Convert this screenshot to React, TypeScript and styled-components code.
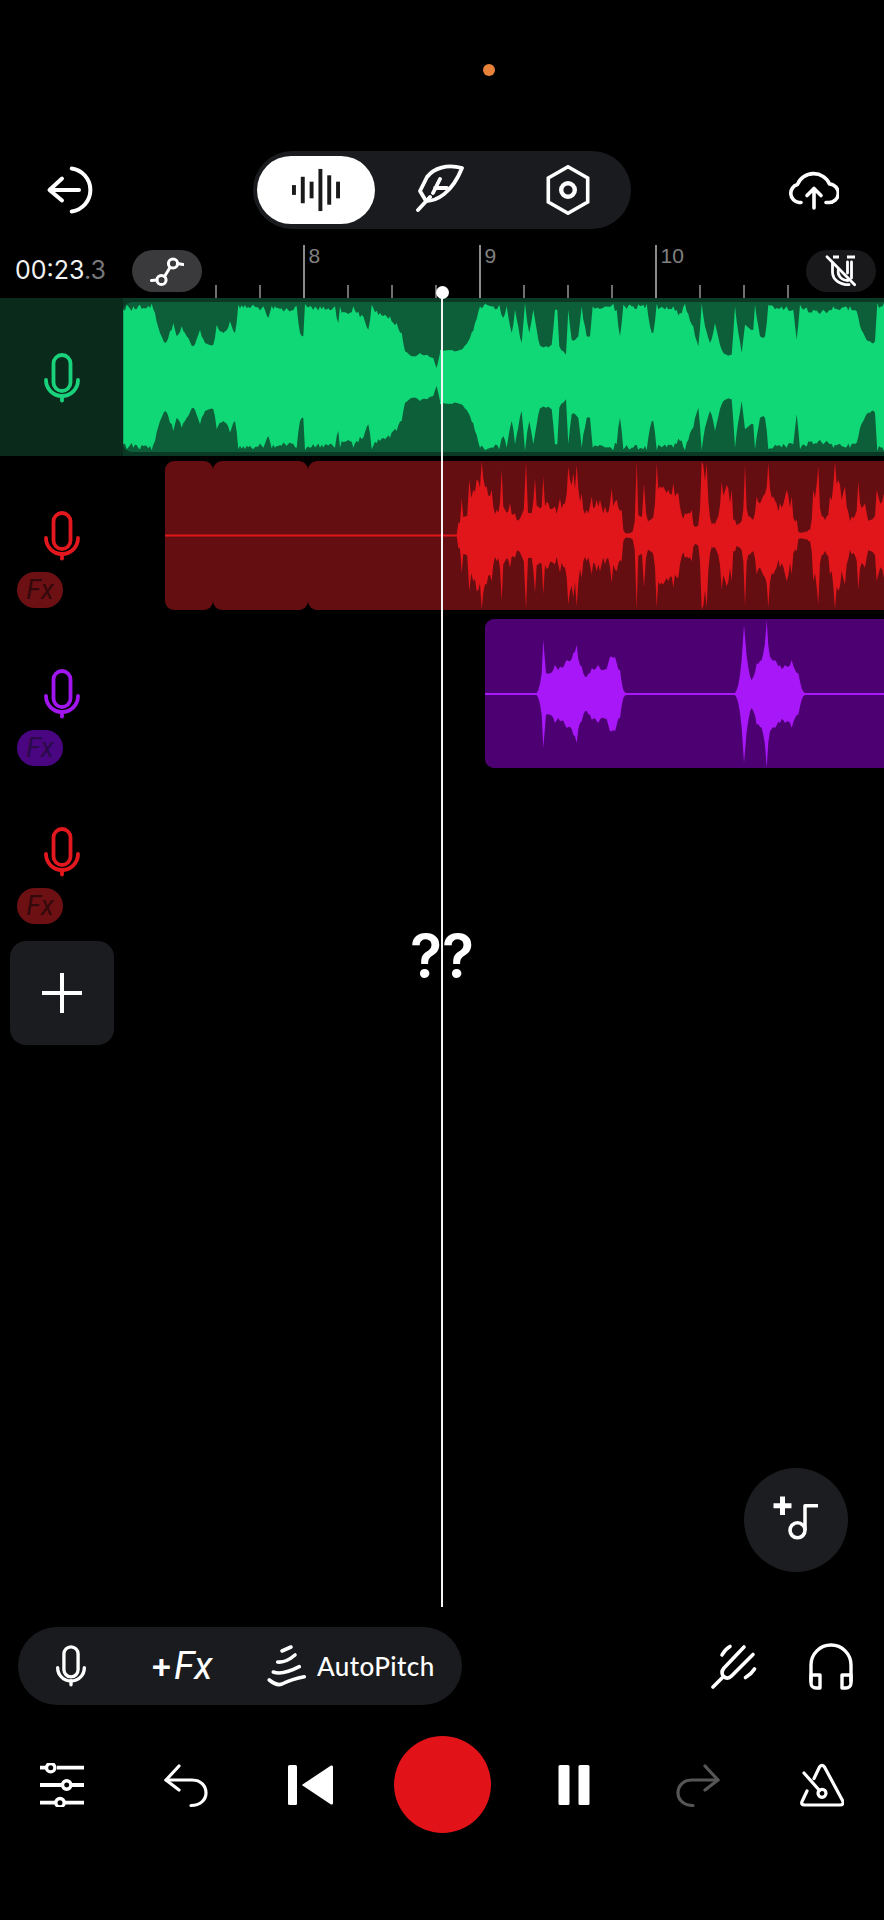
import React from "react";
import styled, { createGlobalStyle } from "styled-components";

const Global = createGlobalStyle`
  html, body { margin: 0; padding: 0; background: #000; }
  * { box-sizing: border-box; }
`;

const Page = styled.div`
  position: relative;
  width: 884px;
  height: 1920px;
  overflow: hidden;
  background: #000;
  display: flex;
  flex-direction: column;
  font-family: "Liberation Sans", sans-serif;
  color: #fff;
`;

const StatusArea = styled.div`
  height: 150px;
  padding: 64px 0 0 483px;
`;
const StatusDot = styled.div`
  width: 12px;
  height: 12px;
  border-radius: 50%;
  background: #e8813a;
`;

const Header = styled.header`
  height: 80px;
  display: flex;
  align-items: center;
  padding-left: 46px;
`;
const ModePill = styled.div`
  width: 378px;
  height: 78px;
  margin-left: 159px;
  padding: 5px 4px;
  border-radius: 39px;
  background: #1a1b1e;
  display: grid;
  grid-template-columns: 118px 134px 118px;
  align-items: center;
`;
const ModeTab = styled.div<{ $active?: boolean }>`
  height: 68px;
  border-radius: 34px;
  display: flex;
  align-items: center;
  justify-content: center;
  background: ${(p) => (p.$active ? "#fff" : "transparent")};
`;
const CloudSlot = styled.div`
  margin-left: 158px;
  display: flex;
`;

const RulerRow = styled.div`
  height: 68px;
  display: flex;
  padding-left: 15px;
`;
const TimeText = styled.div`
  width: 117px;
  padding-top: 26px;
  font-family: Inter, sans-serif;
  font-size: 25px;
  line-height: 28px;
  color: #f2f2f2;
`;
const TimeFraction = styled.span`
  color: #77777a;
`;
const RoundChip = styled.div<{ $bg: string }>`
  width: 70px;
  height: 42px;
  margin-top: 20px;
  border-radius: 21px;
  background: ${(p) => p.$bg};
  display: flex;
  align-items: center;
  justify-content: center;
  flex-shrink: 0;
`;
const Ruler = styled.div`
  width: 591px;
  margin-left: 13px;
  padding-top: 15px;
  display: flex;
  overflow: hidden;
  flex-shrink: 0;
`;
const Tick = styled.div`
  width: 44px;
  height: 53px;
  flex-shrink: 0;
  display: flex;
  align-items: flex-end;
`;
const TickMark = styled.div<{ $major?: boolean }>`
  width: 1.5px;
  height: ${(p) => (p.$major ? 53 : 13)}px;
  background: ${(p) => (p.$major ? "#8b8b8b" : "#6f6f6f")};
`;
const TickLabel = styled.span`
  align-self: flex-start;
  margin-left: 4px;
  font-size: 21px;
  line-height: 22px;
  color: #808080;
`;

const Row = styled.div<{ $active?: boolean }>`
  height: 158px;
  display: flex;
  background: ${(p) => (p.$active ? "#0a3a26" : "transparent")};
`;
const TrackHead = styled.div<{ $active?: boolean }>`
  width: 123px;
  padding-top: 55px;
  flex-shrink: 0;
  display: flex;
  flex-direction: column;
  background: ${(p) => (p.$active ? "#0a2a1c" : "transparent")};
`;
const MicSlot = styled.div`
  margin-left: 44px;
  display: flex;
`;
const FxBadge = styled.div<{ $bg: string; $fg: string }>`
  width: 46px;
  height: 36px;
  margin: 11px 0 0 17px;
  border-radius: 18px;
  background: ${(p) => p.$bg};
  color: ${(p) => p.$fg};
  font-family: Roboto, sans-serif;
  font-style: italic;
  font-size: 27px;
  line-height: 36px;
  text-align: center;
`;
const Lane = styled.div<{ $start: number; $active?: boolean }>`
  flex: 1;
  min-width: 0;
  padding: ${(p) => (p.$active ? "4px 0" : "5px 0 4px")};
  padding-left: ${(p) => p.$start}px;
  display: flex;
`;
const Clip = styled.div`
  position: relative;
  flex: 1;
  min-width: 0;
  display: flex;
  overflow: hidden;
`;
const ClipPart = styled.div<{ $color: string; $width?: number }>`
  flex-shrink: 0;
  width: ${(p) => (p.$width ? `${p.$width}px` : "1000px")};
  border-radius: 9px;
  background: ${(p) => p.$color};
`;
const WaveSvg = styled.svg`
  position: absolute;
  left: 0;
  top: 0;
`;

const AddTrack = styled.div`
  width: 104px;
  height: 104px;
  margin: 11px 0 0 10px;
  border-radius: 16px;
  background: #1b1c1f;
  display: flex;
  align-items: center;
  justify-content: center;
`;

const Spacer = styled.div`
  flex: 1;
  display: flex;
  flex-direction: column;
  justify-content: flex-end;
  align-items: flex-end;
  padding: 0 36px 55px 0;
`;
const MusicButton = styled.div`
  width: 104px;
  height: 104px;
  border-radius: 50%;
  background: #1c1d20;
  display: flex;
`;

const ToolsRow = styled.div`
  height: 78px;
  padding-left: 18px;
  display: flex;
  align-items: center;
`;
const ToolPill = styled.div`
  width: 444px;
  height: 78px;
  border-radius: 39px;
  background: #1a1b1e;
  padding-left: 38px;
  display: flex;
  align-items: center;
`;
const FxLabel = styled.div`
  margin-left: 66px;
  display: flex;
  align-items: center;
  font-family: Roboto, sans-serif;
  width: 62px;
`;
const FxPlus = styled.span`
  font-size: 34px;
  font-weight: 500;
  line-height: 40px;
`;
const FxItalic = styled.span`
  margin-left: 3px;
  font-size: 38px;
  font-style: italic;
  font-weight: 400;
  line-height: 40px;
`;
const PitchSlot = styled.div`
  margin-left: 53px;
  display: flex;
`;
const PitchLabel = styled.span`
  margin-left: 10px;
  font-family: Lato, sans-serif;
  font-size: 26px;
  font-weight: 500;
  letter-spacing: 0.4px;
  white-space: nowrap;
`;
const ToolIcons = styled.div`
  margin-left: 249px;
  display: flex;
  align-items: center;
  gap: 50px;
`;

const Transport = styled.div`
  margin: 31px 0 87px;
  height: 97px;
  display: grid;
  grid-template-columns: repeat(3, 124px) 140px repeat(3, 124px);
  align-items: center;
  justify-items: center;
`;
const RecordButton = styled.div`
  width: 97px;
  height: 97px;
  border-radius: 50%;
  background: #e11319;
`;

const Playhead = styled.div`
  position: absolute;
  left: 441px;
  top: 290px;
  width: 2px;
  height: 1317px;
  background: #f4f4f4;
`;
const PlayheadKnob = styled.div`
  position: absolute;
  left: -5.5px;
  top: -4px;
  width: 13px;
  height: 13px;
  border-radius: 50%;
  background: #fff;
`;
const Unknown = styled.div`
  position: absolute;
  left: 398px;
  top: 921px;
  width: 88px;
  text-align: center;
  font-family: Inter, sans-serif;
  font-weight: 600;
  font-size: 59px;
  line-height: 70px;
`;

type Pt = [number, number];

const Stroke = styled.svg`
  display: block;
  fill: none;
  stroke-linecap: round;
  stroke-linejoin: round;
  flex-shrink: 0;
`;

const Mic = ({ color, w = 36, h = 50, sw = 3.8 }: { color: string; w?: number; h?: number; sw?: number }) => (
  <Stroke width={w} height={h} viewBox="0 0 36 50" stroke={color} strokeWidth={sw}>
    <rect x="9.5" y="2" width="17" height="36" rx="8.5" />
    <path d="M2 27A16 16 0 0 0 34 27" />
    <path d="M18 43V47.5" />
  </Stroke>
);

const BackIcon = () => (
  <Stroke width={48} height={48} viewBox="0 0 48 48" stroke="#fff" strokeWidth={4}>
    <path d="M4 24H33M16 12.5L3.5 24L16 34.5" />
    <path d="M25.7 2.6A21.6 21.6 0 0 1 25.7 45.4" />
  </Stroke>
);

const BarsIcon = () => {
  const bars: [number, number][] = [[0, 10], [9, 27], [18, 17], [27, 43], [36, 30], [45, 17]];
  return (
    <svg width={48} height={44} viewBox="0 0 49 44" fill="#1a1a1a">
      {bars.map(([x, h]) => (
        <rect key={x} x={x} y={22 - h / 2} width={4} height={h} />
      ))}
    </svg>
  );
};

const FeatherIcon = () => (
  <Stroke width={52} height={52} viewBox="9 9 52 52" stroke="#fff" strokeWidth={3.8}>
    <path d="M55 13C40 9 27 13 20 22L13 36L19 46C30 46 45 38 55 13Z" />
    <path d="M23 42L11 55M33 24L26 38M28 33H40" />
  </Stroke>
);

const HexIcon = () => (
  <Stroke width={44} height={50} viewBox="0 0 44 50" stroke="#fff" strokeWidth={3.6}>
    <path d="M22 1.8L41.7 13V37L22 48.2L2.3 37V13Z" strokeLinejoin="miter" />
    <circle cx="22" cy="25" r="6.8" strokeWidth={4.4} />
  </Stroke>
);

const CloudIcon = () => (
  <Stroke width={50} height={40} viewBox="0 0 50 40" stroke="#fff" strokeWidth={3.6}>
    <path d="M12 32.5H10A9.2 9.2 0 0 1 8.5 14.5A17 16 0 0 1 40.5 14A9.2 9.2 0 0 1 39.5 32.5H37" />
    <path d="M25 38V19M18 25.5L25 18.5L32 25.5" />
  </Stroke>
);

const NodesIcon = () => (
  <Stroke width={34} height={34} viewBox="0 0 34 34" stroke="#fff" strokeWidth={3}>
    <circle cx="11.5" cy="26" r="4.6" />
    <circle cx="23" cy="9.5" r="4.6" />
    <path d="M1.5 26.5L7 26M14.5 22.5L20 13.5M27.5 9.5L33 10.5" />
  </Stroke>
);

const MagnetOffIcon = () => (
  <Stroke width={34} height={34} viewBox="22 10 34 34" stroke="#fff" strokeWidth={2.8}>
    <path d="M25 12.7L52.7 40.7" />
    <path d="M31 13H37M45 13H53" strokeLinecap="butt" />
    <path d="M30.5 19V28C30.5 36 38 40.7 47 40.7" />
    <path d="M49.5 18V34M45.5 18V29" />
    <path d="M36.5 25C35 31 39 36.5 46 36.5" />
  </Stroke>
);

const PlusIcon = () => (
  <Stroke width={44} height={44} viewBox="0 0 44 44" stroke="#fff" strokeWidth={4}>
    <path d="M22 2V42M2 22H42" strokeLinecap="butt" />
  </Stroke>
);

const MusicPlusIcon = () => (
  <Stroke width={104} height={104} viewBox="0 0 104 104" stroke="#fff">
    <path d="M38.5 28.5V47M29.5 37.7H47.5" strokeWidth={5} strokeLinecap="butt" />
    <path d="M61 62V37.7H74" strokeWidth={3.5} strokeLinecap="butt" />
    <circle cx="53.5" cy="62.3" r="7.5" strokeWidth={3.6} />
  </Stroke>
);

const PitchIcon = () => (
  <Stroke width={40} height={45} viewBox="11 8 40 45" stroke="#fff" strokeWidth={3.6}>
    <path d="M26 15L35 11" />
    <path d="M21.7 26C26 26.5 32 25 39 19" />
    <path d="M17.3 36C24 38.5 33 36 43.3 30.7" />
    <path d="M13.3 44C17 47 21 50 26 48C31 45.5 38 42.5 48.3 40.7" />
  </Stroke>
);

const ForkIcon = () => (
  <Stroke width={48} height={48} viewBox="0 0 48 48" stroke="#fff" strokeWidth={3.6}>
    <path d="M2 45L12.5 34.5" />
    <path d="M33 5L13 26C10.5 29 10.5 32 12.5 34.5C15 36.5 18 36.5 20.5 34L42 12.5" />
    <path d="M11 13C13 9 15.5 6.5 19 4.5" />
    <path d="M34.5 35.5C38 33.5 41 31 43.5 27" />
  </Stroke>
);

const HeadphonesIcon = () => (
  <Stroke width={44} height={47} viewBox="0 0 44 47" stroke="#fff" strokeWidth={3.4}>
    <path d="M2 38V22A20 20 0 0 1 42 22V38" />
    <path d="M2 32H11V45H7A5 5 0 0 1 2 40Z" />
    <path d="M42 32H33V45H37A5 5 0 0 0 42 40Z" />
  </Stroke>
);

const SlidersIcon = () => (
  <Stroke width={44} height={44} viewBox="0 0 44 44" stroke="#fff" strokeWidth={3.8}>
    <path d="M0 4.7H6M17 4.7H44" strokeLinecap="butt" />
    <path d="M0 22H22M32 22H44" strokeLinecap="butt" />
    <path d="M0 39.7H15.5M25 39.7H44" strokeLinecap="butt" />
    <circle cx="10.7" cy="4.7" r="4.2" strokeWidth={3.4} />
    <circle cx="26.7" cy="22" r="4.2" strokeWidth={3.4} />
    <circle cx="20" cy="39.7" r="4.2" strokeWidth={3.4} />
  </Stroke>
);

const UndoIcon = ({ color, flip }: { color: string; flip?: boolean }) => (
  <Stroke width={44} height={46} viewBox="0 0 44 46" stroke={color} strokeWidth={3.2}>
    <g transform={flip ? "matrix(-1 0 0 1 44 0)" : undefined}>
      <path d="M15 4L2 18L15 28" />
      <path d="M2 18H28C37 18 42 24 42 31C42 38 36 43.5 27 43.5" />
    </g>
  </Stroke>
);

const PrevIcon = () => (
  <svg width={45} height={40} viewBox="0 0 45 40" fill="#fff">
    <rect x="0" y="0" width="9" height="40" rx="1.5" />
    <path d="M14.5 19.5L43 0.6Q45 0 45 2V38Q45 40 43 39.4L14.5 20.5Q14 20 14.5 19.5Z" />
  </svg>
);

const PauseIcon = () => (
  <svg width={32} height={40} viewBox="0 0 32 40" fill="#fff">
    <rect x="0.5" y="0" width="11" height="40" rx="1.5" />
    <rect x="20.5" y="0" width="11" height="40" rx="1.5" />
  </svg>
);

const MetronomeIcon = () => (
  <Stroke width={44} height={44} viewBox="0 0 44 44" stroke="#fff" strokeWidth={3.2}>
    <path d="M14 15.5L19.5 4Q22 0.8 24.5 4L42.5 37.5Q44.5 42 40 42H5Q0 42 2.5 37.5L7 28" />
    <path d="M4 10L19.5 27.5" />
    <circle cx="22" cy="30.3" r="4" />
  </Stroke>
);

// Turns a rough hand-read envelope into a jagged audio outline.
const roughen = (pts: Pt[], noise: number, sharp: number): Pt[] => {
  let seed = 12345;
  const rnd = () => {
    seed = (seed * 1103515245 + 12345) % 2147483648;
    return seed / 2147483648;
  };
  const out: Pt[] = [];
  pts.forEach(([x, h], i) => {
    out.push([x, h]);
    const next = pts[i + 1];
    if (!next) return;
    const steps = Math.floor((next[0] - x) / 1.6);
    const lo = Math.min(h, next[1]);
    const hi = Math.max(h, next[1]);
    for (let s = 1; s < steps; s++) {
      const t = s / steps;
      const lin = h + (next[1] - h) * t;
      const norm = hi > lo ? (lin - lo) / (hi - lo) : 1;
      const shaped = lo + (hi - lo) * Math.pow(norm, sharp);
      out.push([x + (next[0] - x) * t, shaped * (1 - rnd() * noise)]);
    }
  });
  return out;
};

const wavePath = (
  segments: { ox: number; cy: number; pts: Pt[] }[],
  clipLeft: number,
  center: number,
  noise: number,
  sharp: number
) => {
  const all = roughen(
    segments.flatMap((s) => s.pts.map(([x, y]) => [x / 3 + s.ox - clipLeft, (s.cy - y) / 3] as Pt)),
    noise,
    sharp
  ).map(([x, h]) => [x, Math.max(h, 1)] as Pt);
  const top = all.map(([x, h]) => `${x.toFixed(1)},${(center - h).toFixed(1)}`);
  const bottom = [...all].reverse().map(([x, h]) => `${x.toFixed(1)},${(center + h).toFixed(1)}`);
  return `M${top.join("L")}L${bottom.join("L")}Z`;
};

const greenLeft: Pt[] = [[370,60],[380,45],[400,50],[420,45],[455,42],[465,70],[480,130],[497,160],[510,125],[520,100],[530,140],[545,110],[555,130],[565,145],[580,170],[600,120],[615,160],[640,165],[650,105],[670,130],[690,95],[705,130],[715,45],[760,45],[790,50],[805,85],[815,48],[860,55],[890,50],[900,130],[910,140],[915,42],[960,50],[1005,50],[1015,100],[1020,50],[1040,70],[1060,50],[1090,80],[1105,120],[1115,45],[1140,70],[1170,80],[1190,100],[1205,130],[1215,185],[1240,200],[1260,190],[1280,195],[1300,205],[1310,235],[1320,190]];
const greenRight: Pt[] = [[0,180],[60,180],[85,155],[105,100],[120,50],[135,42],[160,50],[178,45],[190,85],[200,50],[215,130],[225,60],[245,160],[255,40],[268,130],[280,60],[300,168],[320,170],[335,165],[345,60],[352,60],[358,170],[370,185],[378,195],[385,60],[395,150],[415,140],[425,50],[440,140],[450,140],[458,50],[520,42],[530,60],[540,140],[550,45],[620,42],[630,110],[640,130],[650,42],[700,50],[720,70],[735,42],[760,110],[775,170],[785,42],[795,110],[810,160],[825,100],[845,180],[860,195],[875,195],[885,50],[905,190],[915,105],[940,120],[945,45],[960,140],[975,140],[985,45],[1040,50],[1060,60],[1070,150],[1080,45],[1120,60],[1150,60],[1180,50],[1230,50],[1250,65],[1270,130],[1290,155],[1305,155],[1312,40],[1332,40]];
const redPts: Pt[] = [[-850,737],[50,737],[55,700],[65,625],[75,680],[88,570],[100,600],[110,570],[125,515],[140,590],[155,600],[170,660],[185,540],[195,660],[210,640],[225,670],[245,675],[258,515],[270,670],[285,565],[295,650],[310,560],[325,640],[345,650],[360,625],[385,530],[400,550],[410,525],[425,610],[440,660],[455,620],[480,630],[495,650],[515,595],[530,630],[545,660],[550,720],[565,730],[578,725],[590,515],[600,680],[612,580],[630,690],[650,520],[670,590],[685,600],[700,580],[715,610],[735,670],[755,660],[770,710],[785,515],[800,520],[820,700],[845,575],[860,585],[875,600],[885,690],[900,700],[915,525],[930,680],[950,620],[985,520],[1000,620],[1020,640],[1040,600],[1055,620],[1070,690],[1075,725],[1095,725],[1105,720],[1120,600],[1135,530],[1150,680],[1170,620],[1185,515],[1215,590],[1235,680],[1255,575],[1275,640],[1295,690],[1310,600],[1332,610]];
const purplePts: Pt[] = [[45,252],[200,252],[205,240],[215,190],[220,90],[228,190],[240,190],[255,165],[270,170],[290,150],[320,105],[335,170],[345,200],[365,175],[385,165],[400,180],[420,140],[435,140],[450,180],[460,240],[470,252],[795,252],[800,240],[815,150],[822,45],[830,140],[845,210],[860,160],[880,130],[890,30],[900,140],[915,150],[930,165],[945,165],[965,150],[985,190],[1000,245],[1005,252],[1242,252]];

type Track = {
  id: string;
  mic: string;
  fx?: { bg: string; fg: string };
  start: number;
  parts: { color: string; width?: number }[];
  wave?: { d: string; fill: string };
  active?: boolean;
};

const tracks: Track[] = [
  {
    id: "a",
    mic: "#1ad27c",
    start: 0,
    active: true,
    parts: [{ color: "#0d5f3a" }],
    wave: {
      d: wavePath([{ ox: 0, cy: 262, pts: greenLeft }, { ox: 440, cy: 262, pts: greenRight }], 123, 75, 0.07, 1),
      fill: "#10d876",
    },
  },
  {
    id: "b",
    mic: "#e3181e",
    fx: { bg: "#6d1013", fg: "#33090b" },
    start: 42,
    parts: [{ color: "#640e12", width: 48 }, { color: "#640e12", width: 95 }, { color: "#640e12" }],
    wave: { d: wavePath([{ ox: 440, cy: 737, pts: redPts }], 165, 74.5, 0.3, 2.6), fill: "#e0161b" },
  },
  {
    id: "c",
    mic: "#a115ee",
    fx: { bg: "#4a0580", fg: "#2a0b48" },
    start: 362,
    parts: [{ color: "#4d0072" }],
    wave: { d: wavePath([{ ox: 470, cy: 252, pts: purplePts }], 485, 75, 0.14, 1.4), fill: "#a817f7" },
  },
  { id: "d", mic: "#e3181e", fx: { bg: "#6d1013", fg: "#33090b" }, start: 0, parts: [] },
];

const majors: Record<number, string> = { 2: "8", 6: "9", 10: "10" };

export default function App() {
  return (
    <Page>
      <Global />
      <StatusArea>
        <StatusDot />
      </StatusArea>
      <Header>
        <BackIcon />
        <ModePill>
          <ModeTab $active>
            <BarsIcon />
          </ModeTab>
          <ModeTab>
            <FeatherIcon />
          </ModeTab>
          <ModeTab>
            <HexIcon />
          </ModeTab>
        </ModePill>
        <CloudSlot>
          <CloudIcon />
        </CloudSlot>
      </Header>
      <RulerRow>
        <TimeText>
          00:23<TimeFraction>.3</TimeFraction>
        </TimeText>
        <RoundChip $bg="#3a3a3c">
          <NodesIcon />
        </RoundChip>
        <Ruler>
          {Array.from({ length: 14 }, (_, i) => (
            <Tick key={i}>
              <TickMark $major={i in majors} />
              {i in majors && <TickLabel>{majors[i]}</TickLabel>}
            </Tick>
          ))}
        </Ruler>
        <RoundChip $bg="#19191c">
          <MagnetOffIcon />
        </RoundChip>
      </RulerRow>
      {tracks.map((t) => (
        <Row key={t.id} $active={t.active}>
          <TrackHead $active={t.active}>
            <MicSlot>
              <Mic color={t.mic} />
            </MicSlot>
            {t.fx && (
              <FxBadge $bg={t.fx.bg} $fg={t.fx.fg}>
                Fx
              </FxBadge>
            )}
          </TrackHead>
          <Lane $start={t.start} $active={t.active}>
            {t.parts.length > 0 && (
              <Clip>
                {t.parts.map((p, i) => (
                  <ClipPart key={i} $color={p.color} $width={p.width} />
                ))}
                {t.wave && (
                  <WaveSvg width="100%" height="100%">
                    <path d={t.wave.d} fill={t.wave.fill} />
                  </WaveSvg>
                )}
              </Clip>
            )}
          </Lane>
        </Row>
      ))}
      <AddTrack>
        <PlusIcon />
      </AddTrack>
      <Spacer>
        <MusicButton>
          <MusicPlusIcon />
        </MusicButton>
      </Spacer>
      <ToolsRow>
        <ToolPill>
          <Mic color="#fff" w={30} h={42} sw={4} />
          <FxLabel>
            <FxPlus>+</FxPlus>
            <FxItalic>Fx</FxItalic>
          </FxLabel>
          <PitchSlot>
            <PitchIcon />
          </PitchSlot>
          <PitchLabel>AutoPitch</PitchLabel>
        </ToolPill>
        <ToolIcons>
          <ForkIcon />
          <HeadphonesIcon />
        </ToolIcons>
      </ToolsRow>
      <Transport>
        <SlidersIcon />
        <UndoIcon color="#fff" />
        <PrevIcon />
        <RecordButton />
        <PauseIcon />
        <UndoIcon color="#565656" flip />
        <MetronomeIcon />
      </Transport>
      <Playhead>
        <PlayheadKnob />
      </Playhead>
      <Unknown>??</Unknown>
    </Page>
  );
}
